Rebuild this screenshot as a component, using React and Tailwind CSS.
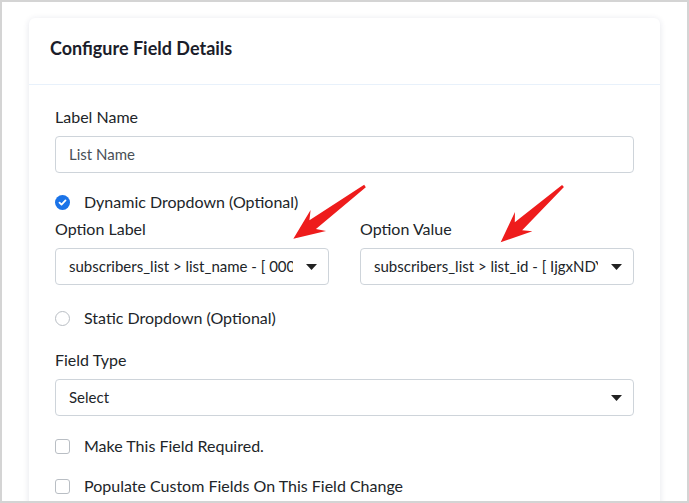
import React from "react";

const font = { fontFamily: "Lato, 'Noto Sans', sans-serif" };

function Caret() {
  return (
    <svg width="11" height="6" viewBox="0 0 11 6" className="shrink-0">
      <path d="M0 0h11L5.5 6z" fill="#222" />
    </svg>
  );
}

function SelectBox({ value, className = "" }) {
  return (
    <div
      className={`flex h-[37px] items-center rounded-[4px] border border-[#ced4da] bg-white pl-[13px] pr-[11px] ${className}`}
    >
      <div className="mr-[13px] min-w-0 flex-1 overflow-hidden whitespace-nowrap text-[15px] text-[#212529]">
        {value}
      </div>
      <Caret />
    </div>
  );
}

function Check({ checked, round, label }) {
  return (
    <div className="flex h-[20px] items-center">
      {checked ? (
        <span className="flex h-[15px] w-[15px] items-center justify-center rounded-full bg-[#1a73e8]">
          <svg width="9" height="9" viewBox="0 0 9 9">
            <path d="M1.5 4.6l2 2 4-4.2" fill="none" stroke="#fff" strokeWidth="1.8" strokeLinecap="round" strokeLinejoin="round" />
          </svg>
        </span>
      ) : (
        <span
          className={`h-[15px] w-[15px] border border-[#b9bec4] bg-white ${round ? "rounded-full" : "rounded-[3px]"}`}
        />
      )}
      <span className="ml-[14px] text-[16px] text-[#212529]">{label}</span>
    </div>
  );
}

// red pointer arrow, tail at (x, y), drawn toward angle in degrees
function Arrow({ x, y, len, angle }) {
  const L = len;
  const pts = `0,-1.4 ${L - 24},-5.5 ${L - 31},-13 ${L},0 ${L - 31},13 ${L - 24},5.5 0,1.4`;
  return (
    <svg className="pointer-events-none absolute left-0 top-0" width="689" height="503">
      <g transform={`translate(${x} ${y}) rotate(${angle})`}>
        <polygon points={pts} fill="#ee1c1c" />
      </g>
    </svg>
  );
}

export default function App() {
  return (
    <div
      className="relative h-[503px] w-[689px] overflow-hidden border-2 border-[#d4d4d4] bg-white"
      style={font}
    >
      <div className="pl-[27px] pt-[16px]">
        <div className="w-[631px] rounded-[6px] bg-white shadow-[0_1px_6px_rgba(30,40,90,0.12)]">
          <div className="flex h-[67px] items-center border-b border-[#e8f1fb] pb-[5px] pl-[21px]">
            <h1 className="text-[18px] font-bold text-[#1b1d2a]">Configure Field Details</h1>
          </div>
          <div className="px-[26px] pt-[22px] pb-[40px] text-[#212529]">
            <div className="h-[20px] text-[16px] leading-[20px]">Label Name</div>
            <div className="mt-[9px] flex h-[37px] items-center rounded-[4px] border border-[#ced4da] pl-[13px] text-[15px] text-[#495057]">
              List Name
            </div>

            <div className="mt-[19px]">
              <Check checked label="Dynamic Dropdown (Optional)" />
            </div>

            <div className="mt-[7px] grid grid-cols-2 gap-x-[31px]">
              <div>
                <div className="h-[20px] text-[16px] leading-[20px]">Option Label</div>
                <SelectBox className="mt-[9px]" value="subscribers_list > list_name - [ 0000000000 ]" />
              </div>
              <div>
                <div className="h-[20px] text-[16px] leading-[20px]">Option Value</div>
                <SelectBox className="mt-[9px]" value="subscribers_list > list_id - [ IjgxNDY3NjQ5MjEi ]" />
              </div>
            </div>

            <div className="mt-[23px]">
              <Check round label="Static Dropdown (Optional)" />
            </div>

            <div className="mt-[22px] h-[20px] text-[16px] leading-[20px]">Field Type</div>
            <SelectBox className="mt-[9px]" value="Select" />

            <div className="mt-[20px]">
              <Check label="Make This Field Required." />
            </div>
            <div className="mt-[20px]">
              <Check label="Populate Custom Fields On This Field Change" />
            </div>
          </div>
        </div>
      </div>

      <Arrow x={363} y={184} len={89} angle={143.6} />
      <Arrow x={561} y={184} len={84} angle={137.9} />

      <div className="pointer-events-none absolute left-[413px] top-[493px] whitespace-nowrap text-[22px] text-[#d6d6d6]">
        Activate Windows
      </div>
    </div>
  );
}
